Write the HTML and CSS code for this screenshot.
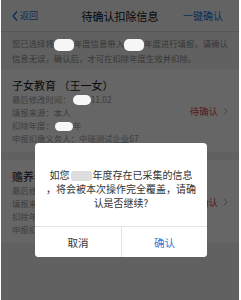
FILE: index.html
```html
<!DOCTYPE html>
<html lang="zh-CN">
<head>
  <meta charset="UTF-8">
  <meta name="viewport" content="width=device-width, initial-scale=1.0">
  <title>待确认扣除信息</title>
  <link rel="stylesheet" href="styles.css">
</head>
<body>
  <div class="screen">
    <!-- Nav bar -->
    <header class="nav">
      <a class="back">
        <svg width="6" height="10" viewBox="0 0 6 10"><polyline points="5,0.5 1,5 5,9.5" fill="none" stroke="#1a6fd8" stroke-width="1.3"/></svg>
        <span>返回</span>
      </a>
      <h1 class="title">待确认扣除信息</h1>
      <a class="confirm-all">一键确认</a>
    </header>

    <!-- Notice -->
    <div class="notice">
      <div class="line">您已选择将<span class="mask m-notice"></span>年度信息带入<span class="mask m-notice"></span>年度进行填报，请确认</div>
      <div class="line">信息无误，确认后，才可在扣除年度生效并扣除。</div>
    </div>

    <!-- Items -->
    <div class="item">
      <div class="info">
        <div class="item-title">子女教育 （王一女）</div>
        <div class="row">最后修改时间：<span class="mask m-row"></span>11.02</div>
        <div class="row">填报来源：本人</div>
        <div class="row">扣除年度：<span class="mask m-row m-year"></span>年</div>
        <div class="row">申报扣缴义务人：中瑞测试企业67</div>
      </div>
      <div class="status">
        待确认
        <svg width="5" height="8" viewBox="0 0 5 8"><polyline points="0.5,0.5 4,4 0.5,7.5" fill="none" stroke="#b5b5b5" stroke-width="1"/></svg>
      </div>
    </div>

    <div class="item">
      <div class="info">
        <div class="item-title">赡养老人</div>
        <div class="row">最后修改时间：2019.11.02</div>
        <div class="row">填报来源：本人</div>
        <div class="row">扣除年度：2019年</div>
        <div class="row">申报扣缴义务人：中瑞测试企业67</div>
      </div>
      <div class="status">
        待确认
        <svg width="5" height="8" viewBox="0 0 5 8"><polyline points="0.5,0.5 4,4 0.5,7.5" fill="none" stroke="#b5b5b5" stroke-width="1"/></svg>
      </div>
    </div>

    <!-- Confirm dialog -->
    <div class="overlay">
      <div class="dialog">
        <div class="dialog-text">
          <div class="line">如您<span class="mask m-dialog"></span>年度存在已采集的信息</div>
          <div class="line">，将会被本次操作完全覆盖，请确</div>
          <div class="line">认是否继续?</div>
        </div>
        <div class="dialog-buttons">
          <button class="btn cancel">取消</button>
          <button class="btn ok">确认</button>
        </div>
      </div>
    </div>
  </div>
</body>
</html>
```

FILE: styles.css
```css
html, body { margin: 0; background: #fff; }
body { font-family: "Noto Sans CJK SC", "Noto Sans", sans-serif; }

.screen { position: relative; height: 300px; margin: 0 2px 0 1px; background: #f2f2f2; overflow: hidden; }

/* nav */
.nav { height: 31px; display: grid; grid-template-columns: 1fr auto 1fr; align-items: center; background: #f8f8f8; border-bottom: 1px solid #d6d6d6; }
.back { display: flex; align-items: center; gap: 2px; padding-left: 11px; color: #1a6fd8; font-size: 9px; }
.title { margin: 0; font-size: 11px; font-weight: normal; color: #111; }
.confirm-all { justify-self: end; padding-right: 16px; color: #1a6fd8; font-size: 10px; }

/* notice */
.notice { padding: 4px 11px 4px; font-size: 8.4px; line-height: 14px; color: #8a8a8a; }
.line { white-space: nowrap; }

/* masks over personal data */
.mask { display: inline-block; position: relative; z-index: 3; vertical-align: middle; background: #f6f6f6; border-radius: 5px; }
.m-notice { width: 20px; height: 12px; }
.m-row { width: 18px; height: 10px; margin-left: 2px; }
.m-year { height: 9px; margin-left: 1px; }
.m-dialog { width: 21px; height: 10px; background: #dedede; border-radius: 3px; margin: 0 1px; }

/* items */
.item { display: flex; align-items: center; justify-content: space-between; background: #fff; padding: 8px 11px 7px; margin-bottom: 8px; }
.item-title { font-size: 11px; line-height: 16px; color: #1a1a1a; }
.row { font-size: 8.4px; line-height: 13px; color: #9a9a9a; white-space: nowrap; }
.status { display: flex; align-items: center; gap: 5px; font-size: 9.4px; color: #e0443a; }

/* dialog */
.overlay { position: absolute; inset: 0; z-index: 2; background: rgba(0, 0, 0, 0.6); }
.dialog { width: 172px; margin: 143px 0 0 34px; background: #fff; border-radius: 4px; overflow: hidden; }
.dialog-text { padding: 25px 4px 16px; font-size: 10px; line-height: 14px; color: #333; text-align: center; }
.dialog-buttons { display: grid; grid-template-columns: 1fr 1fr; border-top: 1px solid #e3e3e3; }
.btn { height: 30px; border: none; background: #fff; font-family: inherit; font-size: 10.5px; color: #333; }
.btn.ok { border-left: 1px solid #e3e3e3; color: #3a7ad6; }
```
